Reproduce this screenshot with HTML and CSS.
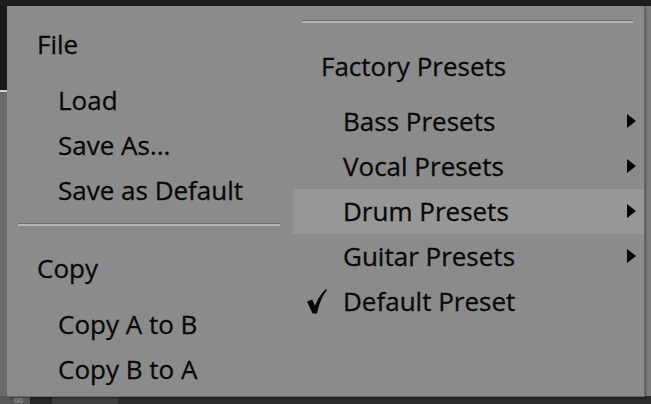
FILE: index.html
```html
<!DOCTYPE html>
<html>
<head>
<meta charset="utf-8">
<link rel="stylesheet" href="styles.css">
</head>
<body>
<div class="stage">
  <div class="topbar"></div>
  <div class="middle">
    <div class="side"></div>
    <div class="fill"></div>
    <div class="rside"></div>
  </div>
  <div class="bottombar">
    <span class="bb-a">00</span><span class="bb-b"></span><span class="bb-c"></span><span class="bb-d"></span>
  </div>

  <div class="menu">
    <div class="col col-left">
      <div class="item head">File</div>
      <div class="item sub">Load</div>
      <div class="item sub">Save As...</div>
      <div class="item sub">Save as Default</div>
      <div class="sep sep-left"></div>
      <div class="item head">Copy</div>
      <div class="item sub">Copy A to B</div>
      <div class="item sub">Copy B to A</div>
    </div>
    <div class="col col-right">
      <div class="sep sep-right"></div>
      <div class="item head rhead">Factory Presets</div>
      <div class="item sub rsub">Bass Presets<svg class="arrow" viewBox="0 0 9 14"><path d="M0 0 L9 7 L0 14 Z"/></svg></div>
      <div class="item sub rsub">Vocal Presets<svg class="arrow" viewBox="0 0 9 14"><path d="M0 0 L9 7 L0 14 Z"/></svg></div>
      <div class="item sub rsub hl">Drum Presets<svg class="arrow" viewBox="0 0 9 14"><path d="M0 0 L9 7 L0 14 Z"/></svg></div>
      <div class="item sub rsub">Guitar Presets<svg class="arrow" viewBox="0 0 9 14"><path d="M0 0 L9 7 L0 14 Z"/></svg></div>
      <div class="item sub rsub checked"><svg class="check" viewBox="0 0 20 25"><path d="M0 12.6 L5.2 10.6 L8 16.8 C10.6 10.2 14.2 4.2 19.2 0 L20 1.2 C15.6 6.4 12.4 13.4 10 24.6 L5.6 24.6 Z"/></svg>Default Preset</div>
    </div>
  </div>
</div>
</body>
</html>
```

FILE: styles.css
```css
* { box-sizing: border-box; }
html, body { margin: 0; padding: 0; }
body {
  width: 651px;
  height: 404px;
  overflow: hidden;
  background: #6c6c6c;
  font-family: "Open Sans", "Noto Sans", sans-serif;
}
.stage {
  position: relative;
  width: 651px;
  height: 404px;
  display: flex;
  flex-direction: column;
}
.topbar {
  height: 6px;
  background: #1d1d1d;
}
.middle {
  flex: 1;
  display: flex;
}
.side {
  width: 7px;
  background: linear-gradient(#1a1a1a 0, #1a1a1a 84px, #d0d0d0 84px, #d0d0d0 86px, #6a6a6a 86px);
}
.fill { flex: 1; background: #6c6c6c; }
.rside {
  width: 8px;
  background: linear-gradient(90deg, #5c5c5c 0, #5c5c5c 2px, #7c7c7c 2px);
}
.bottombar {
  height: 8px;
  display: flex;
  background: #2e2e2e;
  font-size: 8px;
  line-height: 8px;
  color: #aaa;
}
.bb-a { width: 30px; background: #585858; padding-left: 14px; }
.bb-b { width: 22px; background: #262626; }
.bb-c { width: 66px; background: #3e3e3e; }
.bb-d { flex: 1; background: #2a2a2a; }

.menu {
  position: absolute;
  left: 7px;
  top: 6px;
  width: 637px;
  height: 390px;
  background: #8b8b8b;
  box-shadow: 1px 1px 0 #6a6a6a, 2px 2px 2px rgba(0,0,0,0.35);
  display: grid;
  grid-template-columns: 286px 1fr;
  color: #080808;
  font-size: 26px;
  -webkit-text-stroke: 0.3px #080808;
}
.col { display: flex; flex-direction: column; }
.col-left { padding-top: 16px; }
.col-right { padding-top: 14px; }
.item {
  height: 45px;
  line-height: 45px;
  white-space: nowrap;
  display: flex;
  align-items: center;
}
.head { padding-left: 30px; margin-bottom: 11px; }
.sub { padding-left: 51px; }
.rhead { padding-left: 28px; margin-bottom: 10px; }
.rsub { padding-left: 50px; position: relative; }
.sep {
  height: 3px;
  border-top: 1px solid #6e6e6e;
  background: #b4b4b4;
}
.sep-left { margin: 10px 13px 20px 11px; }
.sep-right { margin: 0 11px 21px 9px; }
.hl { background: #979797; }
.arrow {
  position: absolute;
  right: 8px;
  top: 15px;
  width: 9px;
  height: 14px;
  fill: #050505;
}
.check {
  position: absolute;
  left: 14px;
  top: 10px;
  width: 20px;
  height: 25px;
  fill: #050505;
}
```
